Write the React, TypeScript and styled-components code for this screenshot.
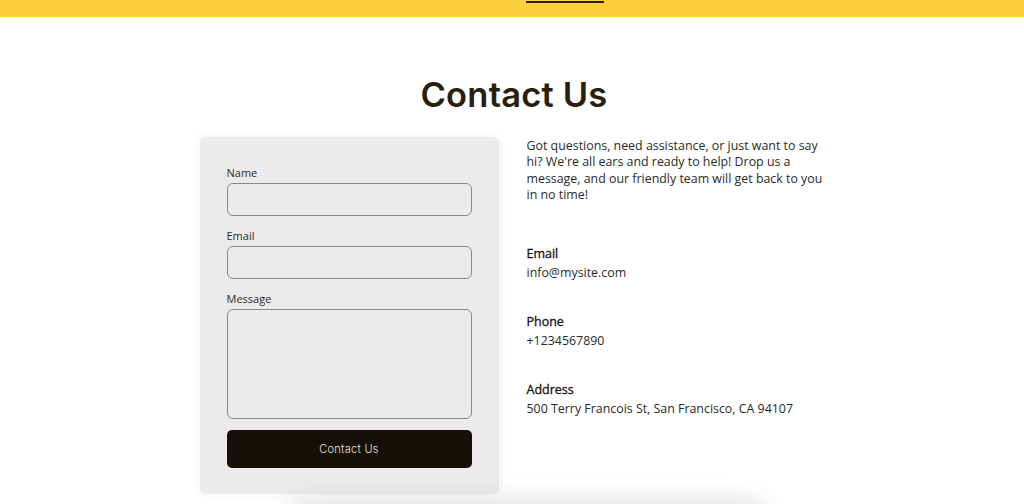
import React from 'react';
import styled, { createGlobalStyle } from 'styled-components';

const GlobalStyle = createGlobalStyle`
    * { box-sizing: border-box; }
    body {
        margin: 0;
        background: #ffffff;
        font-family: "Open Sans", "Liberation Sans", sans-serif;
        overflow: hidden;
    }
`;

const TopBar = styled.header`
    height: 17px;
    background: #fdd03f;
    display: flex;
    justify-content: center;
`;

const NavUnderline = styled.div`
    width: 78px;
    height: 2px;
    margin: 1px 0 0 106px;
    background: #2b1d0c;
`;

const Section = styled.main`
    display: flex;
    flex-direction: column;
    align-items: center;
    padding-top: 56px;
`;

const Title = styled.h1`
    margin: 0 0 0 4px;
    font-family: Inter, "Noto Sans", sans-serif;
    font-weight: 600;
    font-size: 34.5px;
    line-height: 44px;
    letter-spacing: 0.2px;
    color: #2a1f0f;
`;

const Columns = styled.div`
    display: flex;
    gap: 28px;
    margin-top: 20px;
    margin-left: 2px;
`;

const Card = styled.form`
    width: 299px;
    height: 357px;
    background: #eceaea;
    border-radius: 5px;
    box-shadow: 0 0 12px rgba(0, 0, 0, 0.05);
    padding: 29px 27px 0 27px;
    display: flex;
    flex-direction: column;
`;

const Label = styled.label`
    font-size: 11px;
    line-height: 14px;
    color: #2e2a26;
    margin-bottom: 3px;
`;

const Input = styled.input`
    height: 33px;
    width: 100%;
    border: 1px solid #8c8a89;
    border-radius: 6px;
    background: transparent;
    margin-bottom: 13px;
`;

const TextArea = styled.textarea`
    height: 110px;
    width: 100%;
    border: 1px solid #8c8a89;
    border-radius: 6px;
    background: transparent;
    resize: none;
    margin-bottom: 11px;
`;

const Button = styled.button`
    height: 38px;
    width: 100%;
    border: none;
    border-radius: 5px;
    background: #15110a;
    color: #e9e5df;
    font-family: Inter, "Noto Sans", sans-serif;
    font-size: 11px;
    font-weight: 300;
    letter-spacing: 0.3px;
`;

const Info = styled.div`
    width: 300px;
    padding-top: 1px;
    display: flex;
    flex-direction: column;
`;

const Intro = styled.p`
    margin: 0 0 43px 0;
    font-size: 12.4px;
    line-height: 16.3px;
    color: #2c2a27;
`;

const Block = styled.div`
    display: flex;
    flex-direction: column;
    gap: 4px;
    margin-bottom: 34px;
`;

const BlockTitle = styled.div`
    font-size: 12.5px;
    line-height: 15px;
    color: #15110d;
    -webkit-text-stroke: 0.3px #15110d;
`;

const BlockText = styled.div`
    font-size: 12.4px;
    line-height: 15px;
    color: #2c2a27;
`;

const NextShadow = styled.div`
    width: 480px;
    height: 40px;
    margin-top: 12px;
    margin-left: 30px;
    border-radius: 20px;
    box-shadow: 0 -6px 24px rgba(0, 0, 0, 0.12);
`;

const contacts = [
    { title: 'Email', text: 'info@mysite.com' },
    { title: 'Phone', text: '+1234567890' },
    { title: 'Address', text: '500 Terry Francois St, San Francisco, CA 94107' },
];

export const App = () => {
    return (
        <>
            <GlobalStyle />
            <TopBar>
                <NavUnderline />
            </TopBar>
            <Section>
                <Title>Contact Us</Title>
                <Columns>
                    <Card onSubmit={(e) => e.preventDefault()}>
                        <Label>Name</Label>
                        <Input type="text" />
                        <Label>Email</Label>
                        <Input type="email" />
                        <Label>Message</Label>
                        <TextArea />
                        <Button type="submit">Contact Us</Button>
                    </Card>
                    <Info>
                        <Intro>
                            Got questions, need assistance, or just want to say hi? We're all ears and ready to help! Drop us a message, and our friendly team will get back to you in no time!
                        </Intro>
                        {contacts.map((c) => (
                            <Block key={c.title}>
                                <BlockTitle>{c.title}</BlockTitle>
                                <BlockText>{c.text}</BlockText>
                            </Block>
                        ))}
                    </Info>
                </Columns>
                <NextShadow />
            </Section>
        </>
    );
};

export default App;
